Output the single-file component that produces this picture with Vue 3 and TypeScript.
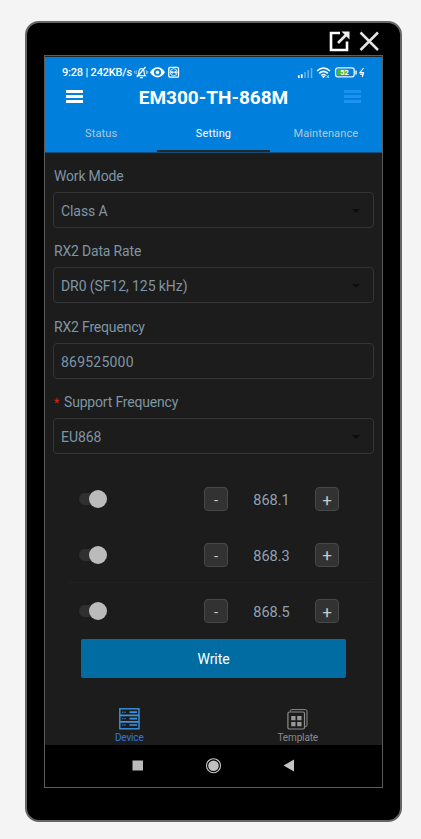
<script setup lang="ts">
import { ref } from 'vue'

interface Field {
  label: string
  value: string
  select: boolean
  required?: boolean
}

const tabs = ['Status', 'Setting', 'Maintenance']
const activeTab = ref('Setting')

const fields: Field[] = [
  { label: 'Work Mode', value: 'Class A', select: true },
  { label: 'RX2 Data Rate', value: 'DR0 (SF12, 125 kHz)', select: true },
  { label: 'RX2 Frequency', value: '869525000', select: false },
  { label: 'Support Frequency', value: 'EU868', select: true, required: true },
]

const channels = ref([868.1, 868.3, 868.5])

function step(index: number, delta: number) {
  channels.value[index] = Math.round((channels.value[index] + delta) * 10) / 10
}
</script>

<template>
  <div class="page">
    <div class="phone">
      <div class="window-bar">
        <svg class="popout" width="21" height="21" viewBox="0 0 21 21" fill="none">
          <path d="M11 2H2v17h16v-8.500" stroke="#fff" stroke-width="2.600" />
          <path d="M9 12 17.500 3.500" stroke="#e6e6e6" stroke-width="2.600" />
          <path d="M12.500 .5H20.500v8z" fill="#eee" />
        </svg>
        <svg class="close" width="21" height="21" viewBox="0 0 21 21" fill="none">
          <path d="M1.500 1.500 19 19M19 1.500 1.500 19" stroke="#e4e4e4" stroke-width="2.500" />
        </svg>
      </div>

      <div class="screen">
        <header class="header">
          <div class="status">
            <span class="time">9:28 | 242KB/s</span>
            <svg class="sys" width="47" height="13" viewBox="0 0 47 13" fill="none" stroke="#fff">
              <path d="M4.600 9.600c1.300-1 .9-3.600 1.500-5.100C6.700 3 7.500 2.500 8.500 2.500c2 .2 2.600 2 2.600 3.700 0 1.600.3 2.600 1.200 3.400zM7 11.600h3" stroke-width="1.100" />
              <path d="M4 11 12.500 1" stroke-width="1.200" />
              <path d="M1.600 5v2.500M14.700 5v2.500M3.200 4.300v3.900M13.300 4.300v3.900" stroke-width=".8" opacity=".7" />
              <path d="M17 6.300C21-.5 28-.5 32 6.300 28 13.100 21 13.100 17 6.300z" fill="#fff" stroke="none" />
              <circle cx="24.500" cy="6.300" r="2.700" fill="#fff" stroke="#0080dc" stroke-width="1.700" />
              <rect x="35.800" y="1.300" width="9.700" height="9.900" rx="1.200" stroke-width="1.300" />
              <circle cx="40.700" cy="6.200" r="3.500" stroke-width=".8" />
              <path d="M38 6.200h5.400" stroke-width="1" />
              <path d="m37.500 6.200 2-1.700v3.400zM43.900 6.200l-2-1.700v3.400z" fill="#fff" stroke="none" />
            </svg>
            <svg class="net" width="70" height="13" viewBox="0 0 70 13" fill="none">
              <path d="M1.800 12V9.300M4.800 12V8.200" stroke="#fff" stroke-width="1.700" />
              <path d="M8 12V6M11.200 12V4M14.500 12V2" stroke="#68b3e9" stroke-width="1.500" />
              <path d="M20 5q6.500-6 13 0M22.200 7.400q4.300-4 8.600 0M24.300 9.500q2.200-2 4.400 0" stroke="#fff" stroke-width="1.500" />
              <path d="m25.300 10.500 1.200 1.300 1.200-1.300zM29.500 9.500l2.500 2.300M32 9.500l-2.500 2.300" fill="#fff" stroke="#fff" stroke-width=".8" />
              <rect x="38.600" y="1.900" width="18.600" height="8.900" rx="2.200" stroke="#e8f5ff" stroke-width="1.300" />
              <rect x="40" y="3.300" width="9.700" height="6.100" fill="#4cb81c" />
              <path d="M59 4.400v4" stroke="#e8f5ff" stroke-width="1.500" />
              <text class="charge" x="43.200" y="9.200" fill="#fff">52</text>
              <path d="m66.500 2-3.600 4.600h3.600l-1.300 4.400M63 8.200h3.800" stroke="#fff" stroke-width="1.100" />
            </svg>
          </div>

          <div class="title-row">
            <button class="burger" aria-label="Menu"><i /><i /><i /></button>
            <h1>EM300-TH-868M</h1>
            <button class="burger dim" aria-label="More"><i /><i /><i /></button>
          </div>

          <nav class="tabs">
            <button
              v-for="tab in tabs"
              :key="tab"
              class="tab"
              :class="{ active: tab === activeTab }"
              @click="activeTab = tab"
            >
              <span>{{ tab }}</span>
            </button>
          </nav>
        </header>

        <main class="form">
          <div v-for="field in fields" :key="field.label" class="field">
            <div class="label">
              <span v-if="field.required" class="star">*</span><span>{{ field.label }}</span>
            </div>
            <div class="control" :class="{ numeric: !field.select }">
              <span>{{ field.value }}</span>
              <i v-if="field.select" class="caret" />
            </div>
          </div>
        </main>

        <section class="channels">
          <div v-for="(channel, index) in channels" :key="index" class="channel">
            <div class="switch"><i /></div>
            <button class="step" @click="step(index, -0.1)">-</button>
            <span class="freq">{{ channel.toFixed(1) }}</span>
            <button class="step plus" @click="step(index, 0.1)">+</button>
          </div>
        </section>

        <button class="write">Write</button>

        <footer class="bottom">
          <div class="item current">
            <svg width="21" height="22" viewBox="0 0 21 22" fill="none" stroke="#3c93e0">
              <rect x=".8" y=".8" width="19.200" height="20" stroke-width="1.400" />
              <path d="M1 7.400h19M1 13.900h19" stroke-width="1.600" />
              <path d="M10.500 4.200h7.500M10.500 10.600h7.500M10.500 17h7.500" stroke-width="1.700" />
              <path d="M3.300 4.200h1M5.500 4.200h1M3.300 10.600h1M5.500 10.600h1M3.300 17h1M5.500 17h1" stroke-width="1.400" />
            </svg>
            <span>Device</span>
          </div>
          <div class="item">
            <svg width="21" height="22" viewBox="0 0 21 22" fill="none" stroke="#8c8c8c">
              <path d="M3.300 3.500V2.800Q3.300 1.600 4.500 1.600h14q1.500 0 1.500 1.500v14q0 1.500-1.500 1.500h-.8" stroke-width="1" />
              <rect x=".9" y="4" width="16.600" height="17" rx="1.500" stroke-width="1.200" />
              <path d="M4.200 8h4.300v4.300H4.200zM10.200 8h4.300v4.300h-4.300zM4.200 14h4.300v4.300H4.200zM10.200 14h4.300v4.300h-4.300z" fill="#999" stroke="none" />
            </svg>
            <span>Template</span>
          </div>
        </footer>

        <div class="android">
          <svg width="163" height="17" viewBox="0 0 163 17">
            <rect x=".5" y="3.500" width="10.500" height="10" fill="#bababa" />
            <circle cx="81.500" cy="8.700" r="7" fill="none" stroke="#c8c8c8" stroke-width="1.100" />
            <circle cx="81.500" cy="8.700" r="5.300" fill="#c0c0c0" />
            <path d="m151.500 8.600 10.500-6v12z" fill="#c4c4c4" />
          </svg>
        </div>
      </div>
    </div>
  </div>
</template>

<style>
body {
  background: #f4f4f4;
}
</style>

<style scoped>
* {
  box-sizing: border-box;
}
.page {
  height: 839px;
  padding: 21px 19px 0 25px;
  overflow: hidden;
  background: #f4f4f4;
  font-family: Roboto, 'Liberation Sans', sans-serif;
}
button {
  padding: 0;
  border: 0;
  background: none;
  font-family: inherit;
}
.phone {
  width: 377px;
  height: 801px;
  padding: 0 16px 0 17px;
  border: 2px solid #666;
  border-radius: 14px;
  background: #000;
}
.window-bar {
  display: flex;
  justify-content: flex-end;
  gap: 9px;
  height: 32px;
  padding: 8px 4px 0 0;
}
.screen {
  display: flex;
  flex-direction: column;
  width: 339px;
  height: 733px;
  border: 1px solid #5c5c5c;
  background: #1c1c1c;
}
.header {
  height: 97px;
  padding-top: 1px;
  border-top: 1px solid #222;
  border-bottom: 1px solid #174f7c;
  background: #0080dc;
}
.status {
  display: flex;
  height: 28px;
  padding: 8px 15px 0 17px;
}
.status svg {
  flex: none;
}
.time {
  flex: none;
  width: 71px;
  color: #fff;
  font-size: 11px;
  font-weight: 500;
  letter-spacing: -0.180px;
  line-height: 13px;
  white-space: nowrap;
}
.net {
  margin-left: auto;
}
.charge {
  font-size: 7.500px;
  font-weight: 700;
}
.title-row {
  display: flex;
  align-items: center;
  justify-content: space-between;
  height: 23px;
  padding: 0 21px;
}
h1 {
  margin: 0;
  color: #fff;
  font-size: 19px;
  font-weight: 700;
  line-height: 23px;
}
.burger {
  display: flex;
  flex-direction: column;
  gap: 2px;
  width: 17px;
  margin-top: -2px;
}
.burger i {
  height: 3px;
  background: #fff;
}
.burger.dim i {
  background: #1c93f2;
}
.tabs {
  display: grid;
  grid-template-columns: repeat(3, 1fr);
  height: 43px;
}
.tab {
  height: 43px;
  padding-top: 7px;
  border-bottom: 2px solid transparent;
  color: #b7c6d2;
  font-size: 11px;
  letter-spacing: 0.120px;
  line-height: 13px;
}
.tab.active {
  border-bottom-color: #20292f;
  color: #fff;
}
.form {
  padding: 11px 8px 0;
}
.field {
  height: 75.300px;
}
.label {
  height: 28px;
  padding: 3px 0 0 1px;
  color: #7f95a4;
  font-size: 14px;
  letter-spacing: -0.180px;
  line-height: 19px;
}
.star {
  margin-right: 5px;
  color: #e02010;
  font-size: 12px;
}
.control {
  display: flex;
  align-items: center;
  justify-content: space-between;
  height: 36px;
  padding: 2px 13px 0 7px;
  border: 1px solid #343436;
  border-radius: 4px;
  color: #7f95a4;
  font-size: 14px;
  letter-spacing: -0.080px;
}
.numeric {
  letter-spacing: 0.220px;
}
.caret {
  border: 4px solid transparent;
  border-top-color: #0c0c0c;
  border-bottom: 0;
}
.channels {
  height: 174px;
  padding: 6px 8px 0 24px;
}
.channel {
  display: flex;
  align-items: center;
  height: 56px;
  padding-left: 10px;
}
.channel:nth-child(2) {
  border-bottom: 1px solid #212121;
}
.switch {
  display: flex;
  align-items: center;
  justify-content: flex-end;
  width: 24px;
  height: 12px;
  border-radius: 6px;
  background: #303030;
}
.switch i {
  flex: none;
  width: 18px;
  height: 18px;
  margin-right: -4px;
  border-radius: 50%;
  background: #bbb;
}
.step {
  width: 24px;
  height: 24px;
  padding-top: 2px;
  margin-left: 101px;
  border: 1px solid #484848;
  border-radius: 4px;
  background: #323232;
  color: #c8c8c8;
  font-size: 15px;
  line-height: 20px;
}
.plus {
  padding-top: 2px;
  margin-left: 0;
  font-size: 17px;
  line-height: 19px;
}
.freq {
  width: 87px;
  padding-top: 3px;
  color: #91a2b2;
  font-size: 14.500px;
  text-align: center;
}
.write {
  width: 265px;
  height: 39px;
  padding-top: 1px;
  margin-left: 36px;
  border-radius: 2px;
  background: #006ca2;
  color: #fff;
  font-size: 14px;
  letter-spacing: -0.100px;
}
.bottom {
  display: grid;
  grid-template-columns: 1fr 1fr;
  height: 67px;
  padding-top: 30px;
}
.item {
  display: flex;
  flex-direction: column;
  align-items: center;
  gap: 2px;
  color: #8b8b8b;
  font-size: 10px;
  letter-spacing: -0.150px;
  line-height: 12px;
}
.current {
  color: #3378e0;
}
.android {
  flex: 1;
  padding: 12px 0 0 87px;
  background: #000;
}
</style>
